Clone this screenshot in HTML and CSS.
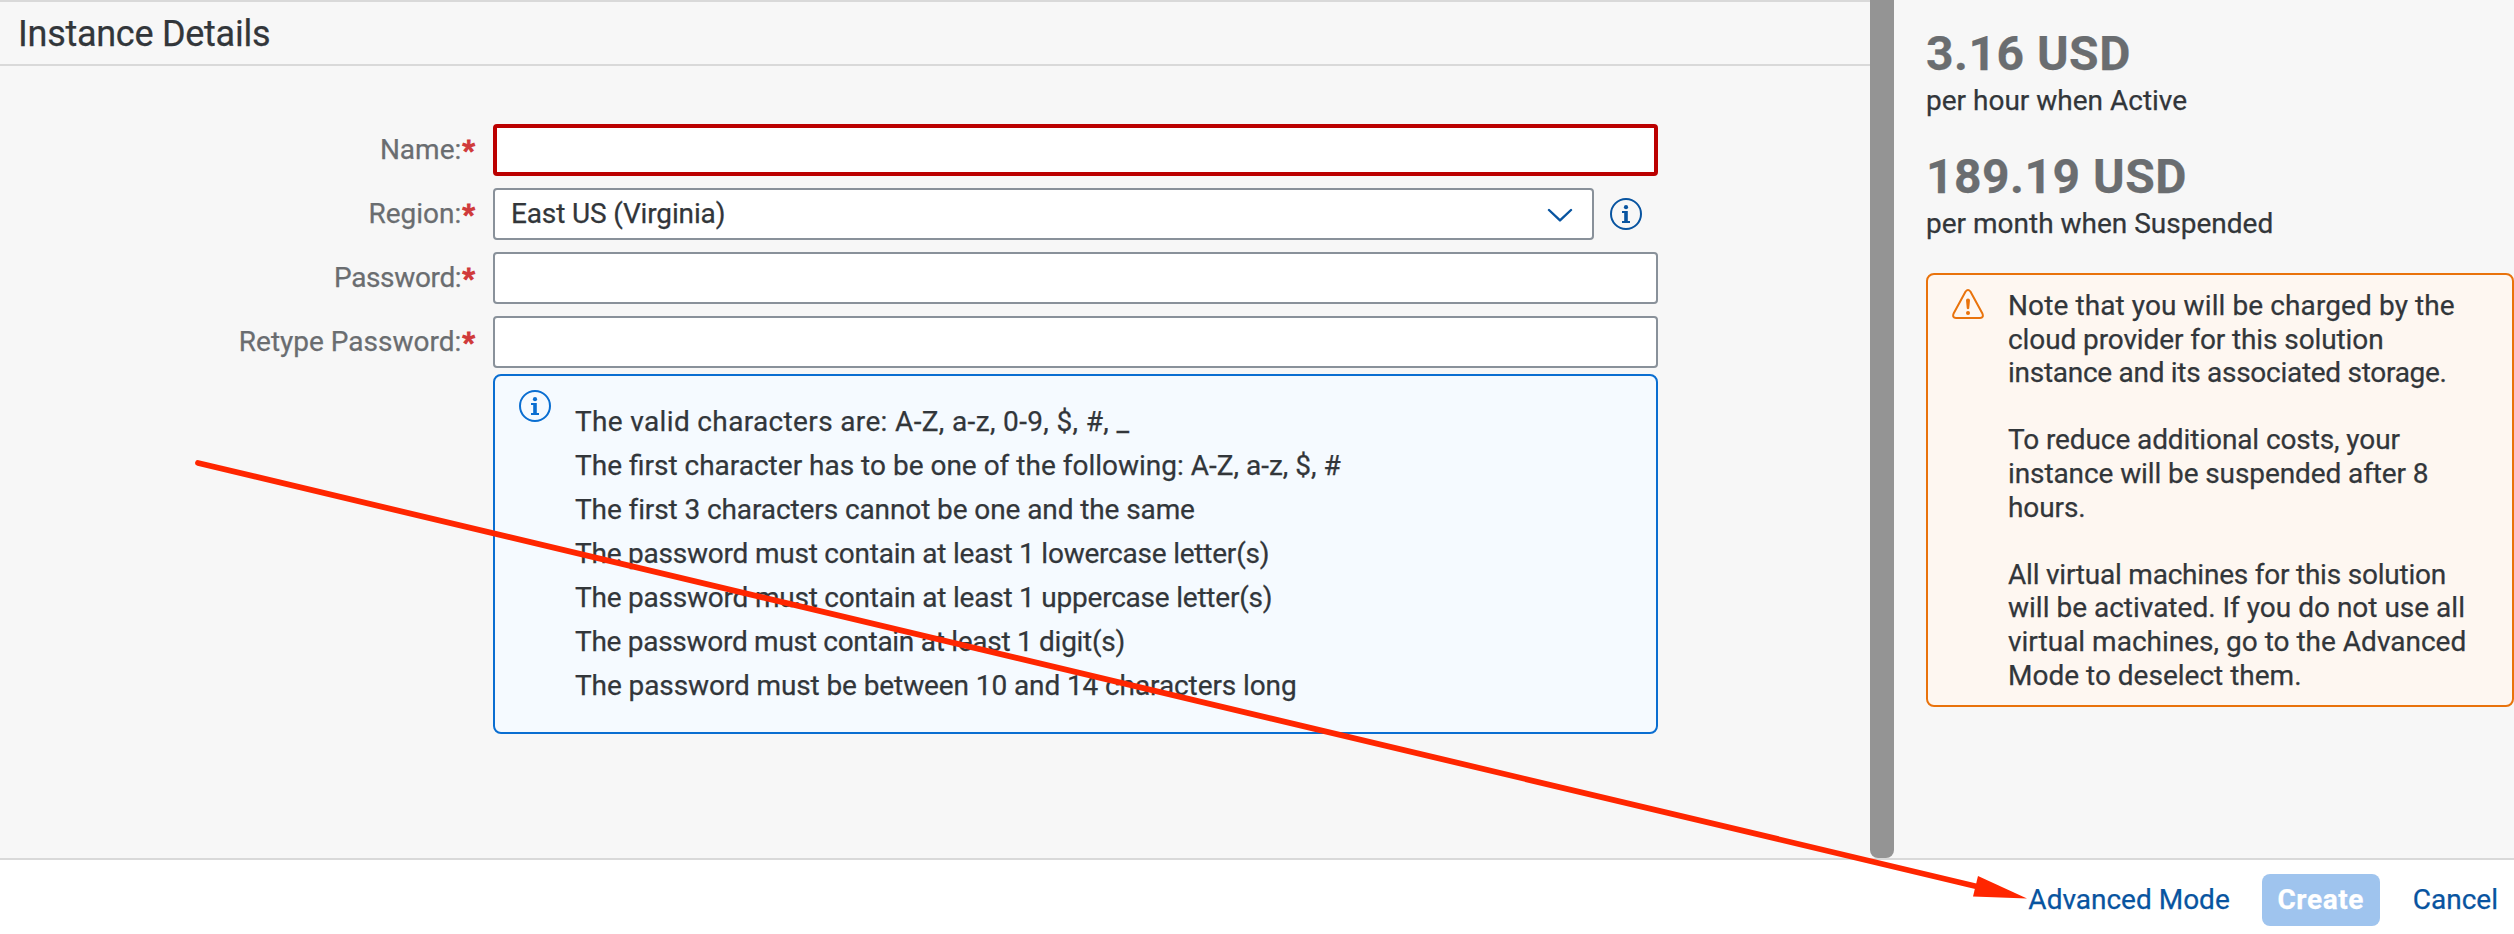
FILE: index.html
```
<!DOCTYPE html>
<html lang="en">
<head>
<meta charset="utf-8">
<title>Instance Details</title>
<link rel="stylesheet" href="styles.css">
</head>
<body>
<div class="page">
  <div class="content">
    <main class="main">
      <h1 class="title">Instance Details</h1>
      <form class="form">
        <div class="row">
          <label class="label" for="name">Name:<b class="req">*</b></label>
          <input class="field field-error" id="name" type="text">
        </div>
        <div class="row">
          <span class="label">Region:<b class="req">*</b></span>
          <div class="field select">
            <span>East US (Virginia)</span>
            <svg class="chevron" viewBox="0 0 26 14"><path d="M2 2 13 12.4 24 2"/></svg>
          </div>
          <svg class="icon-info help" viewBox="0 0 32 32"><circle cx="16" cy="16" r="15"/><path d="M12 13h5.8v10H20v2H12v-2h2.200v-8H12z"/><circle class="dot" cx="16" cy="9.200" r="2.100"/></svg>
        </div>
        <div class="row">
          <label class="label tight" for="pw">Password:<b class="req">*</b></label>
          <input class="field" id="pw" type="password">
        </div>
        <div class="row">
          <label class="label" for="pw2">Retype Password:<b class="req">*</b></label>
          <input class="field" id="pw2" type="password">
        </div>
        <div class="rules">
          <svg class="icon-info" viewBox="0 0 32 32"><circle cx="16" cy="16" r="15"/><path d="M12 13h5.8v10H20v2H12v-2h2.200v-8H12z"/><circle class="dot" cx="16" cy="9.200" r="2.100"/></svg>
          <ul class="rule-list">
            <li class="ls-wide">The valid characters are: A-Z, a-z, 0-9, $, #, _</li>
            <li class="ls-0">The first character has to be one of the following: A-Z, a-z, $, #</li>
            <li class="ls-1">The first 3 characters cannot be one and the same</li>
            <li class="ls-2">The password must contain at least 1 lowercase letter(s)</li>
            <li class="ls-2">The password must contain at least 1 uppercase letter(s)</li>
            <li class="ls-3">The password must contain at least 1 digit(s)</li>
            <li class="ls-1">The password must be between 10 and 14 characters long</li>
          </ul>
        </div>
      </form>
    </main>
    <div class="splitter"></div>
    <aside class="side">
      <div class="cost"><div class="price">3.16 USD</div><div class="unit">per hour when Active</div></div>
      <div class="cost"><div class="price">189.19 USD</div><div class="unit">per month when Suspended</div></div>
      <div class="warning">
        <svg class="icon-warn" viewBox="0 0 32 30"><path class="tri" d="M13.600 2.500Q16 -.5 18.400 2.500L30.400 24.500Q32 28.800 28 29H4Q0 28.800 1.600 24.500Z"/><path d="M14 11.200Q14 9.400 16 9.400T18 11.200L17.200 19.500Q16 21 14.800 19.500Z"/><circle cx="16" cy="24" r="2"/></svg>
        <div class="note">
          <p>Note that you will be charged by the<br><span class="ls-1">cloud provider for this solution</span><br><span class="ls-3">instance and its associated storage.</span></p>
          <p class="ls-1">To reduce additional costs, your<br>instance will be suspended after 8<br>hours.</p>
          <p><span class="ls-2">All virtual machines for this solution</span><br><span class="ls-0">will be activated. If you do not use all</span><br><span class="ls-0">virtual machines, go to the Advanced</span><br><span class="ls-0">Mode to deselect them.</span></p>
        </div>
      </div>
    </aside>
  </div>
  <footer class="footer">
    <button class="btn advanced">Advanced Mode</button>
    <button class="btn primary">Create</button>
    <button class="btn">Cancel</button>
  </footer>
  <svg class="arrow" viewBox="0 0 2514 934"><path class="shaft" d="M198 463 1980 887.200"/><path class="head" d="M1978 876 2027 898.500 1973 896.500Z"/></svg>
</div>
</body>
</html>
```
FILE: styles.css
```
* { box-sizing: border-box; }
body {
  margin: 0;
  font: 28px/34px Roboto, "Noto Sans", sans-serif;
  color: #32363a;
  background: #fff;
  -webkit-text-stroke: 0.25px currentColor;
}
.page {
  position: relative;
  display: flex;
  flex-direction: column;
  width: 2514px;
  height: 934px;
  overflow: hidden;
}
.content { display: flex; height: 858px; background: #f7f7f7; }
.main { width: 1870px; border-top: 2px solid #d9d9d9; }
.title {
  margin: 0;
  height: 64px;
  padding-left: 18px;
  border-bottom: 2px solid #d9d9d9;
  font-size: 36px;
  font-weight: 400;
  line-height: 64px;
  letter-spacing: -0.27px;
}
.form { padding-top: 58px; }
.row { display: flex; align-items: center; height: 52px; margin-bottom: 12px; }
.label {
  width: 475px;
  margin-right: 18px;
  text-align: right;
  color: #6a6d70;
  white-space: nowrap;
}
.tight { letter-spacing: -0.35px; }
.req {
  position: relative;
  top: 1px;
  margin-left: 1px;
  color: #d03a3a;
  letter-spacing: 0;
  -webkit-text-stroke-width: 1px;
}
.field {
  width: 1165px;
  height: 52px;
  margin: 0;
  padding: 0 18px;
  border: 2px solid #89919a;
  border-radius: 4px;
  background: #fff;
  outline: none;
  font: inherit;
}
.field-error { border: 4px solid #b00; }
.select {
  display: flex;
  align-items: center;
  justify-content: space-between;
  width: 1101px;
  padding: 0 19px 0 16px;
  line-height: 46px;
  letter-spacing: -0.15px;
}
.chevron {
  width: 26px;
  height: 14px;
  margin-top: 2px;
  fill: none;
  stroke: #0854a0;
  stroke-width: 2.4;
  stroke-linecap: round;
  stroke-linejoin: round;
}
.icon-info { flex: none; width: 32px; height: 32px; fill: #0a6ed1; }
.icon-info circle:first-child { fill: none; stroke: #0a6ed1; stroke-width: 2; }
.help { margin-left: 16px; fill: #0854a0; }
.help circle:first-child { stroke: #0854a0; }
.rules {
  display: flex;
  width: 1165px;
  height: 360px;
  margin: -6px 0 0 493px;
  padding: 14px 24px;
  border: 2px solid #0a6ed1;
  border-radius: 8px;
  background: #f5faff;
}
.rule-list {
  margin: 10px 0 0 24px;
  padding: 0;
  list-style: none;
  line-height: 44px;
}
.ls-wide { letter-spacing: 0.35px; }
.ls-0 { letter-spacing: 0; }
.ls-1 { letter-spacing: -0.1px; }
.ls-2 { letter-spacing: -0.22px; }
.ls-3 { letter-spacing: -0.28px; }
.splitter { width: 24px; background: #949494; border-radius: 0 0 8px 8px; }
.side { width: 620px; padding: 24px 0 0 32px; }
.cost { margin-bottom: 30px; }
.price {
  font-size: 48px;
  font-weight: 700;
  line-height: 60px;
  letter-spacing: 0.5px;
  color: #6a6d70;
}
.unit { line-height: 33px; }
.warning {
  display: flex;
  width: 588px;
  height: 434px;
  margin-top: 33px;
  padding: 13px 0 0 24px;
  border: 2px solid #e9730c;
  border-radius: 8px;
  background: #fef7f1;
}
.icon-warn { flex: none; width: 32px; height: 30px; margin-top: 1px; fill: #e9730c; }
.icon-warn .tri { fill: none; stroke: #e9730c; stroke-width: 2; stroke-linejoin: round; }
.note {
  margin: 1px 0 0 24px;
  line-height: 33.6px;
  letter-spacing: 0.1px;
  white-space: nowrap;
}
.note p { margin: 0 0 33.6px; }
.footer {
  display: flex;
  justify-content: flex-end;
  height: 76px;
  padding: 14px 0;
  border-top: 2px solid #d9d9d9;
  background: #fff;
}
.btn {
  height: 52px;
  margin: 0 16px 0 0;
  padding: 0;
  border: 0;
  background: none;
  color: #0854a0;
  font: inherit;
}
.advanced { margin-right: 32px; }
.primary {
  width: 118px;
  margin-right: 33px;
  border-radius: 8px;
  background: #9fc4ee;
  color: #fff;
  font-weight: 700;
  letter-spacing: 0.6px;
}
.arrow { position: absolute; inset: 0; width: 2514px; height: 934px; pointer-events: none; }
.shaft { fill: none; stroke: #ff2600; stroke-width: 5.8; stroke-linecap: round; }
.head { fill: #ff2600; }
```
